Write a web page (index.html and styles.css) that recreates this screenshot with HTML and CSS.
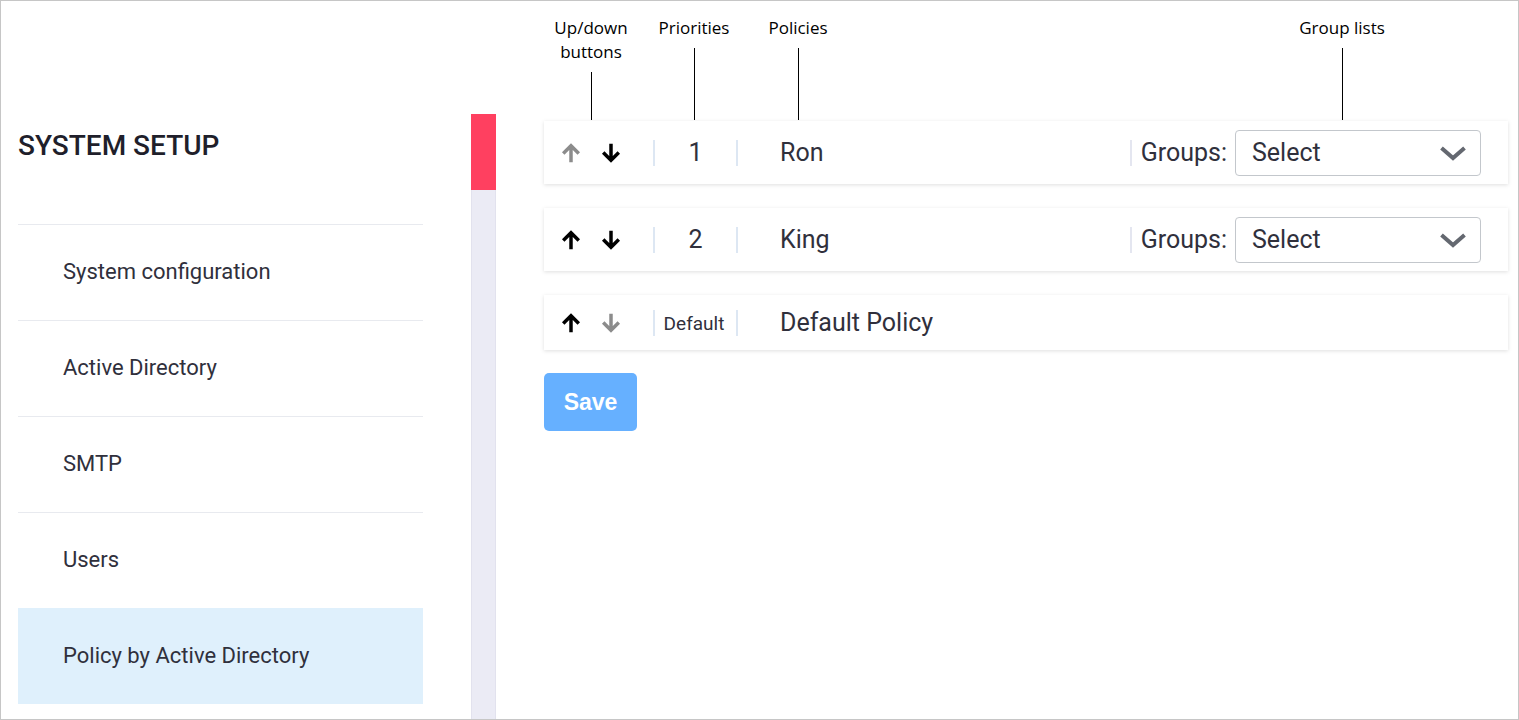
FILE: index.html
```html
<!DOCTYPE html>
<html lang="en">
<head>
  <meta charset="UTF-8" />
  <title>System Setup - Policy by Active Directory</title>
  <link rel="stylesheet" href="styles.css">
</head>
<body>
  <div class="frame">
    <aside class="sidebar">
      <h1 class="sidebar-title">SYSTEM SETUP</h1>
      <ul class="menu">
        <li>System configuration</li>
        <li>Active Directory</li>
        <li>SMTP</li>
        <li>Users</li>
        <li class="active">Policy by Active Directory</li>
      </ul>
    </aside>

    <div class="scroll-track" aria-hidden="true">
      <div class="scroll-thumb"></div>
    </div>

    <main class="content">
      <!-- callouts over the first row -->
      <div class="callout callout-arrows">
        <span>Up/down<br>buttons</span>
        <i class="callout-line"></i>
      </div>
      <div class="callout callout-priority">
        <span>Priorities</span>
        <i class="callout-line"></i>
      </div>
      <div class="callout callout-policy">
        <span>Policies</span>
        <i class="callout-line"></i>
      </div>
      <div class="callout callout-groups">
        <span>Group lists</span>
        <i class="callout-line"></i>
      </div>

      <div class="policy-row">
        <div class="move-buttons">
          <button class="arrow disabled" type="button" aria-label="Move up">
            <svg viewBox="0 0 24 24" width="22" height="22"><path d="M12 22V4M3.5 12.5L12 4l8.5 8.5"/></svg>
          </button>
          <button class="arrow" type="button" aria-label="Move down">
            <svg viewBox="0 0 24 24" width="22" height="22"><path d="M12 2v18M3.5 11.5L12 20l8.5-8.5"/></svg>
          </button>
        </div>
        <div class="priority">1</div>
        <div class="policy-name">Ron</div>
        <div class="groups">
          <span class="groups-label">Groups:</span>
          <div class="select">
            <span>Select</span>
            <svg class="chevron" viewBox="0 0 28 16" width="28" height="16"><path d="M2.5 3l11.5 10L25.5 3"/></svg>
          </div>
        </div>
      </div>

      <div class="policy-row">
        <div class="move-buttons">
          <button class="arrow" type="button" aria-label="Move up">
            <svg viewBox="0 0 24 24" width="22" height="22"><path d="M12 22V4M3.5 12.5L12 4l8.5 8.5"/></svg>
          </button>
          <button class="arrow" type="button" aria-label="Move down">
            <svg viewBox="0 0 24 24" width="22" height="22"><path d="M12 2v18M3.5 11.5L12 20l8.5-8.5"/></svg>
          </button>
        </div>
        <div class="priority">2</div>
        <div class="policy-name">King</div>
        <div class="groups">
          <span class="groups-label">Groups:</span>
          <div class="select">
            <span>Select</span>
            <svg class="chevron" viewBox="0 0 28 16" width="28" height="16"><path d="M2.5 3l11.5 10L25.5 3"/></svg>
          </div>
        </div>
      </div>

      <div class="policy-row default-row">
        <div class="move-buttons">
          <button class="arrow" type="button" aria-label="Move up">
            <svg viewBox="0 0 24 24" width="22" height="22"><path d="M12 22V4M3.5 12.5L12 4l8.5 8.5"/></svg>
          </button>
          <button class="arrow disabled" type="button" aria-label="Move down">
            <svg viewBox="0 0 24 24" width="22" height="22"><path d="M12 2v18M3.5 11.5L12 20l8.5-8.5"/></svg>
          </button>
        </div>
        <div class="priority small">Default</div>
        <div class="policy-name">Default Policy</div>
      </div>

      <button class="save-button" type="button">Save</button>
    </main>
  </div>
</body>
</html>
```

FILE: styles.css
```css
* {
  box-sizing: border-box;
}

body {
  margin: 0;
  font-family: Roboto, 'Liberation Sans', sans-serif;
  background-color: white;
  color: #2f2f3a;
}

.frame {
  width: 1519px;
  height: 720px;
  border: 1px solid #c6c6c6;
  display: flex;
  overflow: hidden;
  background-color: white;
}

/* sidebar */
.sidebar {
  width: 422px;
  padding-left: 17px;
  padding-top: 128px;
  flex-shrink: 0;
}

.sidebar-title {
  margin: 0 0 61px;
  font-size: 28px;
  line-height: 34px;
  font-weight: 500;
  color: #1f1f2b;
}

.menu {
  list-style: none;
  margin: 0;
  padding: 0;
}

.menu li {
  height: 96px;
  border-top: 1px solid #e8eaef;
  padding-left: 45px;
  padding-bottom: 2px;
  display: flex;
  align-items: center;
  font-size: 22px;
  color: #30303c;
}

.menu li.active {
  background-color: #dff0fc;
  border-top-color: #dff0fc;
}

.scroll-track {
  width: 25px;
  margin-top: 113px;
  margin-left: 48px;
  flex-shrink: 0;
  background-color: #ebebf5;
  border-left: 1px solid #e2e2ee;
  border-right: 1px solid #e2e2ee;
}

.scroll-thumb {
  height: 76px;
  margin: 0 -1px;
  background-color: #ff4060;
}

/* content */
.content {
  position: relative;
  flex: 1;
  margin-left: 48px;
  padding-top: 120px;
  padding-right: 10px;
  display: flex;
  flex-direction: column;
  align-items: flex-start;
  gap: 24px;
}

.callout {
  position: absolute;
  top: 15px;
  height: 104px;
  width: 120px;
  display: flex;
  flex-direction: column;
  align-items: center;
  font-family: 'Open Sans', 'Noto Sans', sans-serif;
  font-size: 17px;
  line-height: 24px;
  color: #000;
  text-align: center;
  transform: translateX(-50%);
}

.callout-line {
  flex: 1;
  width: 1px;
  margin-top: 8px;
  background-color: #000;
}

.callout-arrows { left: 47px; }
.callout-priority { left: 150px; }
.callout-policy { left: 254px; }
.callout-groups { left: 798px; }

.policy-row {
  width: 964px;
  height: 63px;
  display: flex;
  align-items: center;
  padding-right: 27px;
  background-color: white;
  box-shadow: 0 1px 4px rgba(0, 0, 0, 0.13);
  font-size: 25px;
  color: #30303c;
}

.default-row {
  height: 55px;
}

.move-buttons {
  display: flex;
  gap: 18px;
  padding-left: 16px;
  padding-right: 31px;
}

.arrow {
  width: 22px;
  height: 22px;
  padding: 0;
  border: none;
  background: none;
  cursor: pointer;
  display: flex;
}

.arrow svg path {
  fill: none;
  stroke: #000;
  stroke-width: 3.8;
}

.arrow.disabled svg path {
  stroke: #8c8c8c;
}

.priority {
  width: 85px;
  height: 26px;
  line-height: 26px;
  border-left: 2px solid #dde7f3;
  border-right: 2px solid #dde7f3;
  text-align: center;
}

.priority.small {
  font-size: 19px;
  line-height: 28px;
  padding-right: 3px;
}

.policy-name {
  flex: 1;
  padding-left: 42px;
}

.groups {
  display: flex;
  align-items: center;
  gap: 8px;
  height: 26px;
  padding-left: 9px;
  border-left: 2px solid #e4e6f0;
}

.select {
  width: 246px;
  height: 46px;
  border: 1px solid #c3c7cc;
  border-radius: 4px;
  display: flex;
  align-items: center;
  justify-content: space-between;
  padding-left: 16px;
  padding-right: 13px;
  background-color: white;
}

.chevron path {
  fill: none;
  stroke: #646870;
  stroke-width: 4;
}

.save-button {
  margin-top: -1px;
  width: 93px;
  height: 58px;
  border: none;
  border-radius: 5px;
  background-color: #66b0ff;
  color: white;
  font-family: 'Liberation Sans', Arial, sans-serif;
  font-weight: 700;
  font-size: 23px;
  cursor: pointer;
}
```
